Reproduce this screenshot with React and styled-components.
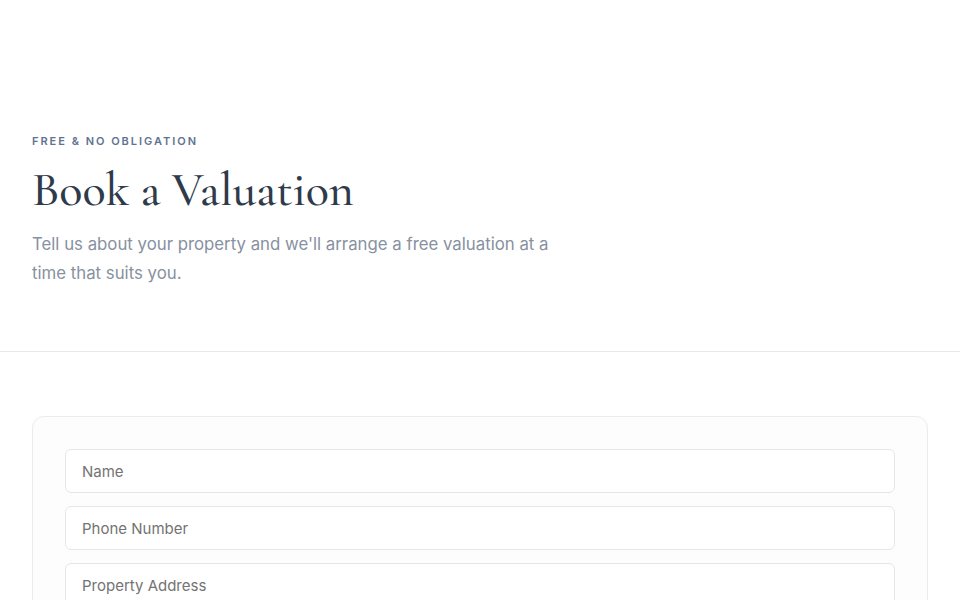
import React from "react";
import styled, { createGlobalStyle } from "styled-components";

const Global = createGlobalStyle`
  html, body { margin: 0; padding: 0; background: #ffffff; }
  body { font-family: Inter, "Noto Sans", sans-serif; -webkit-font-smoothing: antialiased; }
  * { box-sizing: border-box; }
`;

const Hero = styled.header`
  padding: 133px 32px 63px;
  border-bottom: 1px solid #e8e8e8;
`;

const Eyebrow = styled.div`
  font-size: 11px;
  line-height: 16px;
  font-weight: 600;
  letter-spacing: 0.18em;
  text-transform: uppercase;
  color: #5f7391;
  margin-bottom: 12px;
`;

const Title = styled.h1`
  margin: 0;
  font-family: "Cormorant Garamond", "Liberation Serif", "DejaVu Serif", serif;
  font-weight: 500;
  font-size: 48px;
  line-height: 58px;
  color: #2f3a4b;
`;

const Lead = styled.p`
  margin: 11px 0 0;
  max-width: 540px;
  font-size: 16.8px;
  line-height: 29px;
  color: #8791a0;
`;

const Section = styled.main`
  padding: 64px 32px;
`;

const Card = styled.form`
  border: 1px solid #ebebeb;
  border-radius: 12px;
  background: #fdfdfd;
  padding: 32px;
  display: flex;
  flex-direction: column;
  gap: 13px;
`;

const Input = styled.input`
  height: 44px;
  width: 100%;
  border: 1px solid #e6e6e6;
  border-radius: 6px;
  background: #ffffff;
  padding: 0 16px;
  font-family: Inter, "Noto Sans", sans-serif;
  font-size: 15px;
  color: #333;
  outline: none;
  &::placeholder { color: #737373; }
`;

export default function App() {
  return (
    <>
      <Global />
      <Hero>
        <Eyebrow>Free &amp; No Obligation</Eyebrow>
        <Title>Book a Valuation</Title>
        <Lead>
          Tell us about your property and we'll arrange a free valuation at a
          time that suits you.
        </Lead>
      </Hero>
      <Section>
        <Card onSubmit={(e) => e.preventDefault()}>
          <Input placeholder="Name" />
          <Input placeholder="Phone Number" />
          <Input placeholder="Property Address" />
          <Input placeholder="Email" />
        </Card>
      </Section>
    </>
  );
}
